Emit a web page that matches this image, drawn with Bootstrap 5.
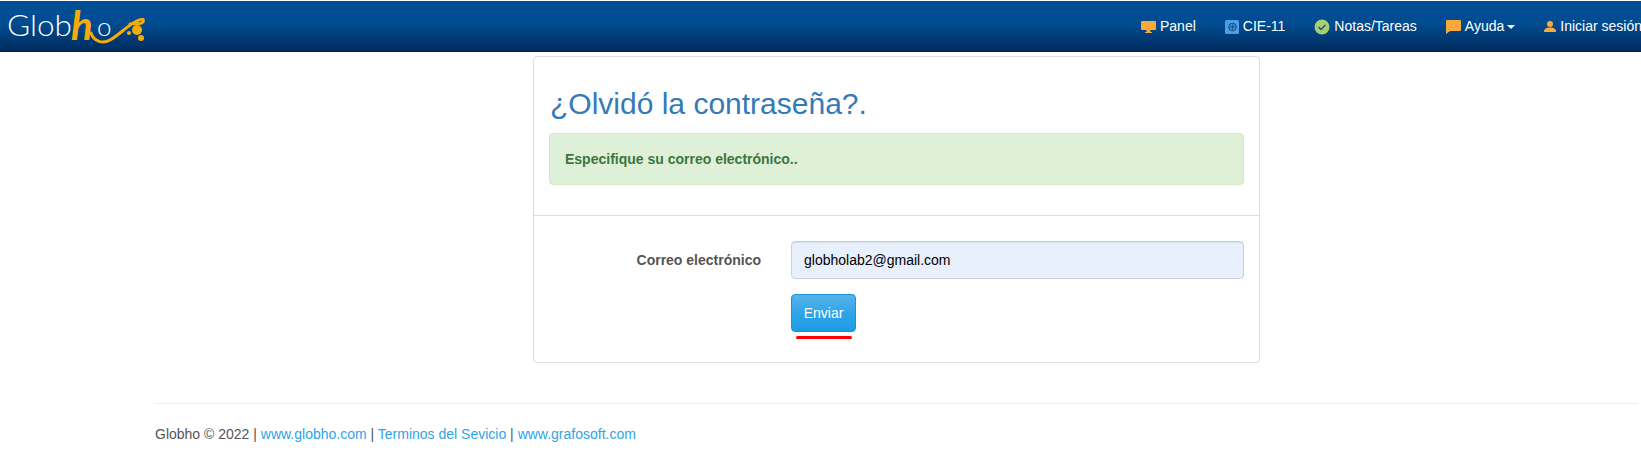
<!DOCTYPE html>
<html lang="es">
<head>
<meta charset="utf-8">
<title>Globho</title>
<link href="https://cdn.jsdelivr.net/npm/bootstrap@5.3.0/dist/css/bootstrap.min.css" rel="stylesheet">
<style>
html,body{overflow:hidden;}
body{font-family:"Liberation Sans",Arial,sans-serif;font-size:14px;color:#555;background:#fff;width:1641px;height:452px;}
.gh-bar{height:51px;padding:1px 0 0;margin-top:1px;flex-wrap:nowrap;justify-content:space-between;background:linear-gradient(to bottom,#004f96 0%,#004c91 45%,#002c5e 100%);border-bottom:1px solid #00204a;}
.gh-logo{display:block;margin:0;padding:0;}
.gh-logo svg{display:block;overflow:visible;}
.gh-nav{flex-wrap:nowrap;flex-shrink:0;margin-right:-1px;}
.gh-nav .nav-link{color:#fff;font-size:14px;padding:0;margin-left:29px;display:flex;align-items:center;gap:4px;white-space:nowrap;}
.gh-caret{display:inline-block;border-left:4px solid transparent;border-right:4px solid transparent;border-top:4px solid #fff;margin-left:-1px;}
.gh-wrap{width:727px;margin:4px 0 0 533px;border:1px solid #ddd;border-radius:4px;}
.gh-top{padding:30px 15px 30px 15px;border-bottom:1px solid #ddd;}
.gh-title{font-size:30px;line-height:33px;color:#337ab7;font-weight:400;margin:0 0 13px 1px;}
.gh-alert{margin:0;height:52px;display:flex;align-items:center;padding:0 15px;background:#dff0d8;border:1px solid #d6e9c6;color:#3c763d;font-weight:700;font-size:14px;border-radius:4px;}
.gh-form{padding:25px 15px 23px 15px;}
.gh-label{width:227px;padding:0 15px 0 0;margin:0;font-size:14px;font-weight:700;text-align:right;color:#555;flex-shrink:0;}
.gh-input{width:453px;height:38px;border:1px solid #ccd0d8;border-radius:4px;background:#e8f0fe;color:#000;font-size:14px;padding:6px 12px;margin-left:15px;box-shadow:inset 0 1px 1px rgba(0,0,0,.075);}
.gh-send{margin:15px 0 0 242px;width:65px;}
.gh-btn{display:block;width:65px;height:38px;padding:0;font-size:14px;color:#fff;border:1px solid #1b92d8;border-radius:4px;background:linear-gradient(to bottom,#54b4eb 0%,#2fa4e7 50%,#1d9ce5 100%);}
.gh-mark{height:3px;width:56px;margin:4px 0 0 5px;background:#f00;border-radius:2px;}
.gh-foot{margin:40px 3px 0 155px;}
.gh-foot hr{margin:0 0 20px 0;border-top:1px solid #eee;opacity:1;}
.gh-foot p{margin:0;font-size:14px;color:#555;line-height:20px;}
.gh-foot a{color:#2fa4e7;text-decoration:none;}
</style>
</head>
<body>
<nav class="navbar gh-bar">
  <a class="navbar-brand gh-logo" href="#" aria-label="Globho">
    <svg width="150" height="50" viewBox="0 0 150 50">
      <text x="7" y="34" font-family="Lato,'Liberation Sans',sans-serif" font-weight="300" font-size="29" fill="#fff" textLength="65" lengthAdjust="spacingAndGlyphs">Glob</text>
      <text x="71" y="38" font-family="Lato,'Liberation Sans',sans-serif" font-style="italic" font-weight="700" font-size="40" fill="#f5ab0c">h</text>
      <path d="M91 31C94 40 103 42 110 38C118 34 127 24 135 20C140 17 145 16 143 20C141 23 137 21 130 22" fill="none" stroke="#f5ab0c" stroke-width="3" stroke-linecap="round" stroke-linejoin="round"/>
      <text x="97" y="34" font-family="Lato,'Liberation Sans',sans-serif" font-weight="300" font-size="26" fill="#fff">o</text>
      <circle cx="137" cy="28" r="5" fill="#f5ab0c"/>
      <circle cx="129" cy="31" r="2" fill="#f5ab0c"/>
      <circle cx="141" cy="36" r="3" fill="#f5ab0c"/>
    </svg>
  </a>
  <ul class="nav gh-nav">
    <li class="nav-item"><a class="nav-link" href="#">
      <svg width="15" height="12" viewBox="0 0 15 12"><path d="M1 0h13a1 1 0 0 1 1 1v7a1 1 0 0 1-1 1H9.500v2h1.500v1H4v-1h1.500V9H1a1 1 0 0 1-1-1V1a1 1 0 0 1 1-1z" fill="#f9a83c"/></svg>Panel</a></li>
    <li class="nav-item"><a class="nav-link" href="#">
      <svg width="14" height="14" viewBox="0 0 14 14"><rect x="0" y="0" width="14" height="14" rx="1.500" fill="#4a9fe8"/><circle cx="7.500" cy="7" r="3.800" fill="none" stroke="#0f4b80" stroke-width="1"/><path d="M7.500 3.500v7M4 7h7M5 4.500l5 5M10 4.500l-5 5" stroke="#0f4b80" stroke-width=".7"/></svg>CIE-11</a></li>
    <li class="nav-item"><a class="nav-link" href="#">
      <svg width="16" height="16" viewBox="0 0 16 16"><circle cx="8" cy="8" r="7.500" fill="#a5cf72"/><path d="M4.500 8l2.500 2.500 4.500-4.500" fill="none" stroke="#27566e" stroke-width="1.500"/></svg>Notas/Tareas</a></li>
    <li class="nav-item"><a class="nav-link" href="#">
      <svg width="15" height="14" viewBox="0 0 15 14"><path d="M1 0h13a1 1 0 0 1 1 1v9a1 1 0 0 1-1 1H4l-4 3V1a1 1 0 0 1 1-1z" fill="#f9a83c"/></svg>Ayuda<span class="gh-caret"></span></a></li>
    <li class="nav-item"><a class="nav-link" href="#">
      <svg width="12" height="11" viewBox="0 0 12 11"><circle cx="6" cy="3" r="3" fill="#f9a83c"/><path d="M0 11c0-3.500 2.500-4.500 6-4.500s6 1 6 4.500z" fill="#f9a83c"/></svg>Iniciar sesión</a></li>
  </ul>
</nav>

<main class="gh-wrap bg-white">
  <div class="gh-top">
    <h1 class="gh-title">¿Olvidó la contraseña?.</h1>
    <div class="alert gh-alert" role="alert">Especifique su correo electrónico..</div>
  </div>
  <form class="gh-form">
    <div class="d-flex align-items-center">
      <label class="form-label gh-label" for="gh-mail">Correo electrónico</label>
      <input id="gh-mail" class="form-control gh-input" type="email" value="globholab2@gmail.com">
    </div>
    <div class="gh-send">
      <button type="button" class="btn gh-btn">Enviar</button>
      <div class="gh-mark"></div>
    </div>
  </form>
</main>

<footer class="gh-foot">
  <hr>
  <p>Globho © 2022 | <a href="#">www.globho.com</a> | <a href="#">Terminos del Sevicio</a> | <a href="#">www.grafosoft.com</a></p>
</footer>
</body>
</html>
